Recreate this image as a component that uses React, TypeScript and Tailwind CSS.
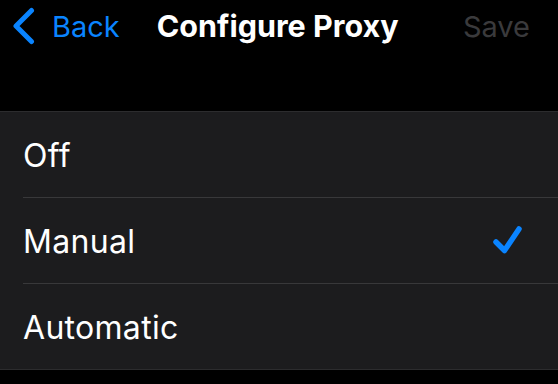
import React from "react";

const font = { fontFamily: "Inter, 'Liberation Sans', Arial, sans-serif" };

function Row({ label, checked, last }: { label: string; checked?: boolean; last?: boolean }) {
  return (
    <div className={`flex pl-[23px] ${last ? "h-[85px]" : "h-[86px]"}`}>
      <div className={`flex flex-1 items-center justify-between pr-[34px] ${last ? "" : "border-b border-[#38383a]"}`}>
        <span className="text-[32px] text-white tracking-[0.3px] pt-[2px]">{label}</span>
        {checked && (
          <svg width="32" height="32" viewBox="0 0 32 32">
            <path d="M4 17 L12.5 25.5 L27 4" fill="none" stroke="#0a84ff" strokeWidth="5.5" strokeLinecap="round" strokeLinejoin="round" />
          </svg>
        )}
      </div>
    </div>
  );
}

export default function App() {
  return (
    <div className="w-[558px] h-[384px] bg-black overflow-hidden" style={font}>
      <div className="flex h-[52px] items-center pl-[12px] pr-[28px]">
        <div className="flex items-center gap-[16px]">
          <svg width="24" height="38" viewBox="0 0 24 38">
            <path d="M19.5 3.5 L4 19 L19.5 34.5" fill="none" stroke="#0a84ff" strokeWidth="5" strokeLinecap="round" strokeLinejoin="round" />
          </svg>
          <span className="text-[29px] text-[#0a84ff] leading-none">Back</span>
        </div>
        <span className="ml-[37px] text-[30.5px] font-bold text-white leading-none">Configure Proxy</span>
        <span className="ml-auto text-[29px] text-[#3a3a3c] leading-none">Save</span>
      </div>
      <div className="h-[59px]" />
      <div className="bg-[#1c1c1e] border-t border-b border-[#2c2c2e]">
        <Row label="Off" />
        <Row label="Manual" checked />
        <Row label="Automatic" last />
      </div>
    </div>
  );
}
